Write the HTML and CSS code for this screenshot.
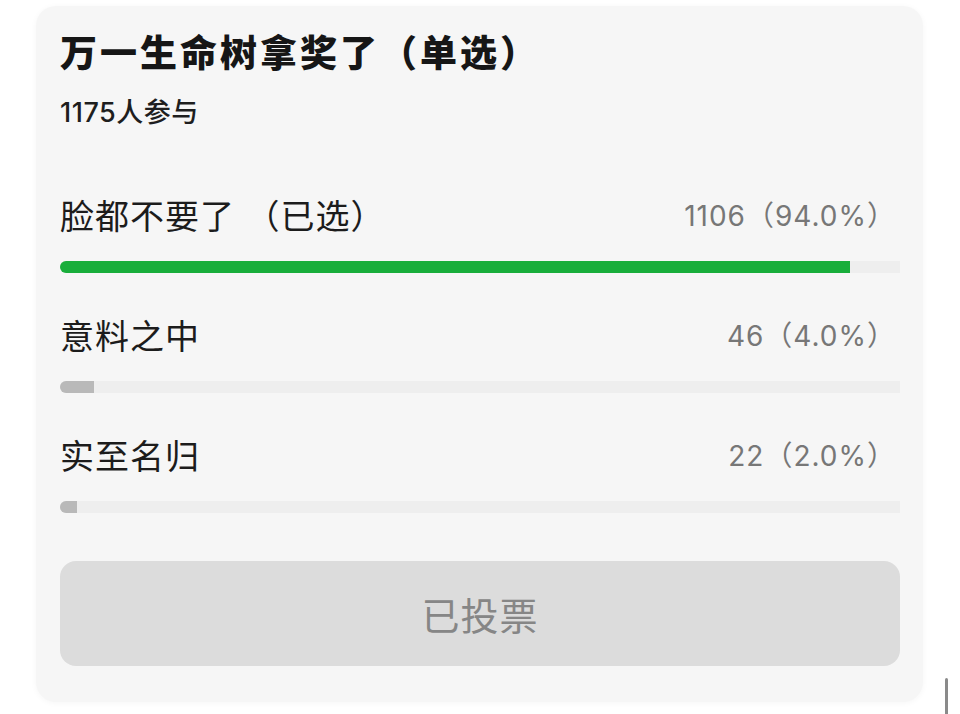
FILE: index.html
```html
<!DOCTYPE html>
<html lang="zh-CN">
<head>
  <meta charset="UTF-8" />
  <meta name="viewport" content="width=device-width, initial-scale=1" />
  <title>投票</title>
  <link rel="stylesheet" href="styles.css">
</head>
<body>

  <div class="poll-card">
    <h1 class="poll-title">万一生命树拿奖了（单选）</h1>
    <p class="poll-count">1175人参与</p>

    <div class="option">
      <div class="option-row">
        <span class="option-name">脸都不要了 （已选）</span>
        <span class="option-votes">1106（94.0%）</span>
      </div>
      <div class="bar-track"><div class="bar-fill chosen" style="width: 94%"></div></div>
    </div>

    <div class="option">
      <div class="option-row">
        <span class="option-name">意料之中</span>
        <span class="option-votes">46（4.0%）</span>
      </div>
      <div class="bar-track"><div class="bar-fill" style="width: 4%"></div></div>
    </div>

    <div class="option">
      <div class="option-row">
        <span class="option-name">实至名归</span>
        <span class="option-votes">22（2.0%）</span>
      </div>
      <div class="bar-track"><div class="bar-fill" style="width: 2%"></div></div>
    </div>

    <button class="vote-btn" disabled>已投票</button>
  </div>

  <div class="scroll-thumb"></div>

</body>
</html>
```

FILE: styles.css
```css
/* Page */
body {
  margin: 0;
  background-color: #ffffff;
  font-family: Inter, "Noto Sans CJK SC", sans-serif;
  height: 714px;
  overflow: hidden;
  position: relative;
}

/* Poll card */
.poll-card {
  margin: 6px 37px 0 36px;
  padding: 26px 23px 36px 24px;
  background-color: #f6f6f6;
  border-radius: 20px;
  box-shadow: 0 1px 6px rgba(0, 0, 0, 0.04);
}
.poll-title {
  margin: 0;
  font-size: 37px;
  line-height: 44px;
  font-weight: 900;
  letter-spacing: 3px;
  color: #161616;
}
.poll-count {
  margin: 21px 0 0;
  font-size: 27px;
  line-height: 32px;
  font-weight: 500;
  letter-spacing: 0.5px;
  color: #1e1e1e;
}

/* Options */
.option {
  margin-top: 41px;
}
.option:first-of-type {
  margin-top: 65px;
}
.option-row {
  display: flex;
  justify-content: space-between;
  align-items: center;
  height: 40px;
  padding-right: 4px;
}
.option-name {
  font-size: 34px;
  letter-spacing: 1px;
  color: #1c1c1c;
}
.option-votes {
  font-size: 28px;
  letter-spacing: 1px;
  color: #777777;
}
.bar-track {
  margin-top: 27px;
  height: 12px;
  background-color: #eeeeee;
  border-radius: 6px 0 0 6px;
}
.bar-fill {
  height: 100%;
  background-color: #b9b9b9;
  border-radius: 6px 0 0 6px;
}
.bar-fill.chosen {
  background-color: #19ae3b;
}

/* Vote button */
.vote-btn {
  display: block;
  width: 100%;
  height: 105px;
  margin-top: 48px;
  border: none;
  border-radius: 16px;
  background-color: #dcdcdc;
  color: #868686;
  font-family: inherit;
  font-size: 38px;
  letter-spacing: 1px;
}

/* Scrollbar thumb at the bottom edge */
.scroll-thumb {
  position: absolute;
  left: 945px;
  top: 678px;
  width: 3px;
  height: 40px;
  border-radius: 2px;
  background-color: #8a8a8a;
}
```
